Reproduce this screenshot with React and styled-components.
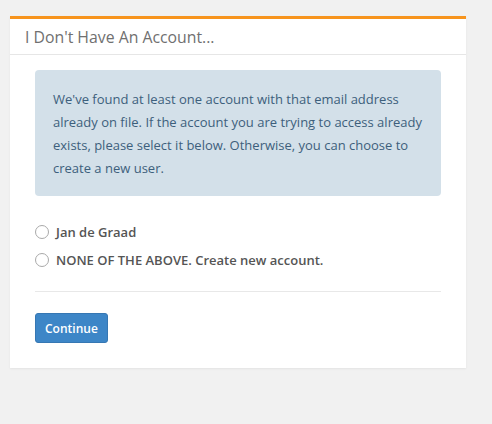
import React, { useState } from 'react';
import styled, { createGlobalStyle } from 'styled-components';

const GlobalStyle = createGlobalStyle`
  html, body {
    margin: 0;
    padding: 0;
    background: #f1f1f1;
    font-family: "Open Sans", "Liberation Sans", sans-serif;
  }
`;

const Page = styled.div`
  padding: 16px 26px 0 10px;
  min-height: 424px;
  box-sizing: border-box;
`;

const Panel = styled.div`
  width: 456px;
  background: #fff;
  border-top: 3px solid #f7941d;
  box-shadow: 0 1px 2px rgba(0, 0, 0, 0.06);
`;

const PanelHeader = styled.div`
  height: 35px;
  display: flex;
  align-items: center;
  padding: 0 15px;
  border-bottom: 1px solid #e6e6e6;
`;

const PanelTitle = styled.h3`
  margin: 0;
  font-size: 15.8px;
  font-weight: 400;
  color: #707070;
`;

const PanelBody = styled.div`
  padding: 15px 25px 25px;
`;

const Alert = styled.div`
  background: #d3e0e9;
  border-radius: 4px;
  padding: 18px 18px 16px;
  color: #3d5f7c;
  font-size: 13px;
  line-height: 23px;
`;

const Options = styled.div`
  display: flex;
  flex-direction: column;
  gap: 10px;
  margin-top: 27px;
  padding-bottom: 22px;
  border-bottom: 1px solid #e8e8e8;
`;

const Option = styled.label`
  display: flex;
  align-items: center;
  gap: 7px;
  font-size: 13px;
  font-weight: 600;
  color: #555;
  cursor: pointer;
  line-height: 18px;
`;

const Radio = styled.span`
  width: 12px;
  height: 12px;
  border-radius: 50%;
  border: 1px solid #a9a9a9;
  background: ${p => (p.checked ? 'radial-gradient(#3d85c6 40%, #fff 45%)' : '#fff')};
  flex-shrink: 0;
`;

const Button = styled.button`
  margin-top: 21px;
  height: 30px;
  padding: 0 9px;
  background: #3d86c7;
  border: 1px solid #3677b3;
  border-radius: 3px;
  color: #fff;
  font-family: inherit;
  font-size: 12px;
  font-weight: 600;
  cursor: pointer;
`;

const options = ['Jan de Graad', 'NONE OF THE ABOVE. Create new account.'];

export default function App() {
  const [selected, setSelected] = useState(null);

  return (
    <Page>
      <GlobalStyle />
      <Panel>
        <PanelHeader>
          <PanelTitle>I Don't Have An Account...</PanelTitle>
        </PanelHeader>
        <PanelBody>
          <Alert>
            We've found at least one account with that email address already on file. If the account
            you are trying to access already exists, please select it below. Otherwise, you can choose
            to create a new user.
          </Alert>
          <Options>
            {options.map((o, i) => (
              <Option key={o} onClick={() => setSelected(i)}>
                <Radio checked={selected === i} />
                {o}
              </Option>
            ))}
          </Options>
          <Button>Continue</Button>
        </PanelBody>
      </Panel>
    </Page>
  );
}
